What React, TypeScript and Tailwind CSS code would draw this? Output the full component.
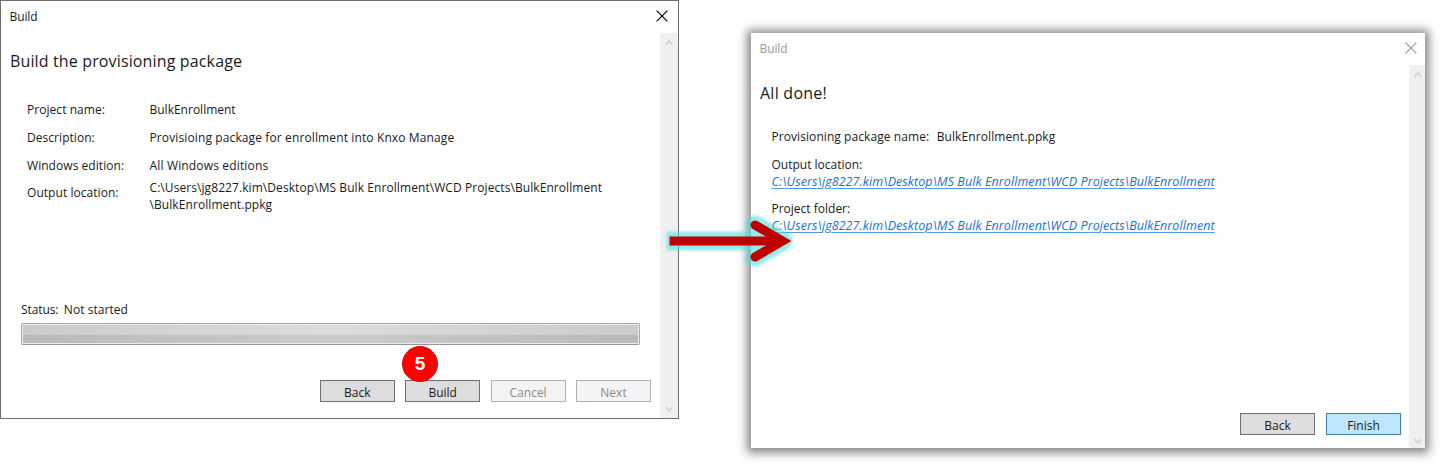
import type { ReactNode } from "react";

const FOLDER = "C:\\Users\\jg8227.kim\\Desktop\\MS Bulk Enrollment\\WCD Projects\\BulkEnrollment";

function CloseIcon() {
  return (
    <svg className="h-[12px] w-[12px]" viewBox="0 0 12 12" fill="none" stroke="currentColor" strokeWidth="1.2">
      <path d="M0.6 0.6 11.4 11.4M11.4 0.6 0.6 11.4" />
    </svg>
  );
}

function Scrollbar({ className }: { className: string }) {
  return (
    <div className={`flex shrink-0 flex-col items-center justify-between bg-[#f0f0f0] text-[#d0d0d0] ${className}`}>
      <svg className="h-[8px] w-[8px]" viewBox="0 0 8 8" fill="none" stroke="currentColor" strokeWidth="1.5">
        <path d="M0.5 6 4 2 7.5 6" />
      </svg>
      <svg className="h-[8px] w-[8px]" viewBox="0 0 8 8" fill="none" stroke="currentColor" strokeWidth="1.5">
        <path d="M0.5 2 4 6 7.5 2" />
      </svg>
    </div>
  );
}

const BUTTON_STYLES = {
  normal: "border-[#707070] bg-[#dddddd] text-[#1a1a1a]",
  disabled: "border-[#adb2b5] bg-[#f4f4f4] text-[#8a8a8a]",
  primary: "border-[#3c7fb1] bg-[#bee6fd] text-[#1a1a1a]",
};

function Button({ kind = "normal", children }: { kind?: keyof typeof BUTTON_STYLES; children: ReactNode }) {
  return (
    <button className={`h-[22px] w-[75px] border pt-px text-center leading-[21px] ${BUTTON_STYLES[kind]}`}>
      {children}
    </button>
  );
}

function Row({ label, children }: { label: string; children: ReactNode }) {
  return (
    <div className="flex h-[27.7px] leading-[27.7px]">
      <dt className="w-[122.5px] shrink-0 tracking-[0.05px]">{label}</dt>
      <dd className="whitespace-nowrap">{children}</dd>
    </div>
  );
}

function BuildDialog() {
  return (
    <section className="flex h-[419px] w-[679px] flex-col border border-[#6e6e6e] bg-white">
      <header className="flex h-8 items-start justify-between pr-[10px] pl-[8.5px]">
        <span className="pt-[7px] leading-[18px] tracking-[-0.1px]">Build</span>
        <span className="pt-[9px] text-black">
          <CloseIcon />
        </span>
      </header>
      <div className="flex min-h-0 flex-1">
        <div className="flex flex-1 flex-col pt-4">
          <h1 className="pl-[9px] text-[16px] leading-6 tracking-[0.14px]">Build the provisioning package</h1>
          <dl className="mt-[23.2px] pl-[26px]">
            <Row label="Project name:">BulkEnrollment</Row>
            <Row label="Description:">
              <span className="tracking-[0.12px]">Provisioing package for enrollment into Knxo Manage</span>
            </Row>
            <Row label="Windows edition:">
              <span className="tracking-[0.16px]">All Windows editions</span>
            </Row>
            <Row label="Output location:">
              <span className="block leading-[17px] tracking-[0.075px]">
                {FOLDER}
                <br />
                \BulkEnrollment.ppkg
              </span>
            </Row>
          </dl>
          <div className="mt-auto flex gap-[5.5px] pl-5 leading-[18px]">
            <span className="tracking-[-0.1px]">Status:</span>
            <span className="tracking-[0.04px]">Not started</span>
          </div>
          <div className="mt-1 ml-5 flex h-[22px] w-[619px] flex-col rounded-[2px] border border-[#a9a9a9] border-b-[#969696] bg-[#ececec] p-px">
            <div className="h-[10px] bg-linear-to-r from-[#cbcbcb] via-[#dcdcdc] to-[#cbcbcb]" />
            <div className="h-[8px] bg-linear-to-r from-[#b9b9b9] via-[#cbcbcb] to-[#b9b9b9]" />
          </div>
          <footer className="mt-[35px] mb-4 flex justify-end gap-[10.4px] pr-[9px]">
            <Button>Back</Button>
            <Button>Build</Button>
            <Button kind="disabled">Cancel</Button>
            <Button kind="disabled">Next</Button>
          </footer>
        </div>
        <Scrollbar className="w-[18px] pt-[6px] pb-[5px]" />
      </div>
    </section>
  );
}

function PathLink() {
  return (
    <a className="whitespace-nowrap text-[12.5px] tracking-[0.08px] text-[#1c6fd0] italic underline decoration-[#4f9be8] decoration-1 underline-offset-2">
      {FOLDER}
    </a>
  );
}

function DoneDialog() {
  return (
    <section className="mt-[33px] ml-[72px] flex h-[415px] w-[674px] flex-col bg-white shadow-[0_1px_9px_4px_rgba(0,0,0,0.47)]">
      <header className="flex h-8 items-start justify-between pr-[8px] pl-[8.5px] text-[#999999]">
        <span className="pt-[7px] leading-[18px] tracking-[-0.1px]">Build</span>
        <span className="pt-[9px]">
          <CloseIcon />
        </span>
      </header>
      <div className="flex min-h-0 flex-1">
        <div className="flex flex-1 flex-col pt-4">
          <h1 className="pl-[9px] text-[16px] leading-6 tracking-[0.25px]">All done!</h1>
          <div className="mt-[23px] pl-[20.5px] leading-[18px]">
            <p className="flex gap-[7.5px]">
              <span className="tracking-[0.07px]">Provisioning package name:</span>
              <span className="tracking-[0.1px]">BulkEnrollment.ppkg</span>
            </p>
            <p className="mt-[9.5px]">Output location:</p>
            <p className="-mt-px">
              <PathLink />
            </p>
            <p className="mt-[9px]">Project folder:</p>
            <p className="-mt-px">
              <PathLink />
            </p>
          </div>
          <footer className="mt-auto mb-[13.5px] flex justify-end gap-[11px] pr-[8px]">
            <Button>Back</Button>
            <Button kind="primary">Finish</Button>
          </footer>
        </div>
        <Scrollbar className="w-[16px] pt-[6px] pb-[3px] pl-[2px]" />
      </div>
    </section>
  );
}

export default function App() {
  return (
    <main className="relative flex h-[463px] w-[1443px] items-start overflow-hidden bg-white font-['Open_Sans','Noto_Sans',sans-serif] text-[12px] text-[#1a1a1a]">
      <BuildDialog />
      <DoneDialog />
      <span className="absolute top-[346px] left-[402px] flex h-9 w-9 items-center justify-center rounded-full border border-[#d00000] bg-[#ff0000] pb-[2px] font-['Liberation_Sans',sans-serif] text-[19px] leading-none font-bold text-white">
        5
      </span>
      <svg className="absolute top-[200px] left-[650px] h-[80px] w-[160px]" viewBox="650 200 160 80" fill="none">
        <defs>
          <filter id="glow" filterUnits="userSpaceOnUse" x="650" y="200" width="160" height="80">
            <feGaussianBlur stdDeviation="1.6" />
          </filter>
        </defs>
        <g filter="url(#glow)" stroke="#4fdedb" opacity="0.6" strokeLinejoin="round">
          <path d="M666.5 241H778" strokeWidth="19" />
          <path d="M755 225 783 241 755 257" strokeWidth="19" strokeLinecap="round" />
        </g>
        <path d="M669.5 241H780" stroke="#c00000" strokeWidth="8.8" />
        <path d="M755 225 782.5 241 755 257" stroke="#c00000" strokeWidth="9" strokeLinecap="round" />
      </svg>
    </main>
  );
}
